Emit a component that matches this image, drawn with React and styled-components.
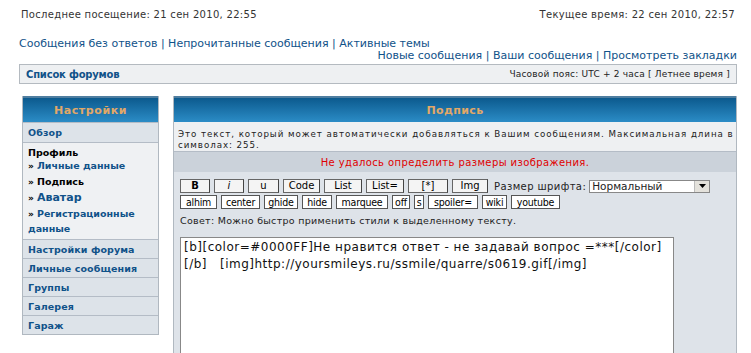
import React from 'react';
import styled, { createGlobalStyle } from 'styled-components';

const GlobalStyle = createGlobalStyle`
	body {
		margin: 0;
		background: #ffffff;
		font-family: 'DejaVu Sans', Verdana, sans-serif;
		color: #222;
	}
`;

const Page = styled.div`
	width: 751px;
	height: 353px;
	overflow: hidden;
	padding: 8px 14px 0 19px;
	box-sizing: border-box;
`;

const InfoRow = styled.div`
	display: flex;
	justify-content: space-between;
	font-size: 10px;
	letter-spacing: 0.3px;
	padding: 0 2px;
	color: #333;
	height: 13px;
	line-height: 13px;
`;

const LinksBlock = styled.div`
	margin-top: 17px;
	font-size: 11px;
	line-height: 12px;
	color: #105289;
	letter-spacing: 0;
`;

const LinksRow = styled.div`
	text-align: ${p => (p.right ? 'right' : 'left')};
`;

const NavBar = styled.div`
	margin-top: 2px;
	height: 18px;
	border: 1px solid #b4bac0;
	background: #eef0f2;
	display: flex;
	justify-content: space-between;
	align-items: center;
	padding: 0 6px;
	font-size: 9px;
	letter-spacing: 0.2px;
`;

const NavTitle = styled.span`
	font-weight: bold;
	color: #105289;
	font-size: 10px;
	letter-spacing: -0.2px;
`;

const Columns = styled.div`
	display: flex;
	gap: 14px;
	margin-top: 12px;
	padding-left: 3px;
`;

const Sidebar = styled.div`
	width: 137px;
	flex: none;
	border: 1px solid #b0b8c0;
	border-top: none;
	box-sizing: border-box;
	align-self: flex-start;
`;

const Header = styled.div`
	height: 26px;
	box-sizing: border-box;
	border-top: 2px solid #4f7ea0;
	background: linear-gradient(#0c5a8e, #2b8cc6);
	color: #e2a867;
	font-weight: bold;
	font-size: 11px;
	letter-spacing: ${p => p.ls || 0.6}px;
	display: flex;
	align-items: center;
	justify-content: center;
`;

const SideItem = styled.div`
	height: ${p => p.h || 19}px;
	box-sizing: border-box;
	background: #dde3e9;
	border-top: 1px solid #b4bcc6;
	padding-left: 5px;
	display: flex;
	align-items: center;
	color: #105289;
	font-weight: bold;
	font-size: 9.5px;
	letter-spacing: 0.1px;
`;

const SubBlock = styled.div`
	background: #eff1f3;
	border-top: 1px solid #b4bcc6;
	padding: 4px 0 3px 5px;
	font-weight: bold;
	font-size: 9.5px;
`;

const SubTitle = styled.div`
	color: #000;
	line-height: 11px;
`;

const SubLink = styled.div`
	color: ${p => (p.active ? '#000' : '#105289')};
	font-size: ${p => p.size || 9.5}px;
	line-height: ${p => p.lh || 16}px;
	&::before {
		content: '» ';
		color: #000;
		font-size: 9px;
	}
`;

const SubCont = styled.div`
	color: #105289;
	line-height: 14px;
`;

const Main = styled.div`
	flex: 1;
	min-width: 0;
	overflow: hidden;
	height: 270px;
	border: 1px solid #b0b8c0;
	border-top: none;
	border-bottom: none;
	background: #dee3e9;
	box-sizing: border-box;
`;

const Description = styled.div`
	background: #eef0f2;
	border-bottom: 1px solid #b4bcc6;
	padding: 7px 2px 2px 4px;
	font-size: 8.7px;
	letter-spacing: 0.95px;
	line-height: 11px;
	color: #222;
	height: 30px;
	box-sizing: border-box;
`;

const ErrorRow = styled.div`
	height: 20px;
	background: #cbd2da;
	color: #e00000;
	font-size: 10px;
	letter-spacing: 0.4px;
	display: flex;
	align-items: center;
	justify-content: center;
`;

const Editor = styled.div`
	padding: 7px 6px 0 6px;
`;

const ToolRow = styled.div`
	display: flex;
	align-items: center;
	gap: ${p => p.gap || 4}px;
	margin-bottom: ${p => p.mb || 0}px;
`;

const TagButton = styled.button`
	height: 14px;
	width: ${p => p.w}px;
	padding: 0;
	margin: 0;
	border: 1px solid #666;
	border-right-color: #444;
	background: #f4f4f4;
	font-family: 'DejaVu Sans', Verdana, sans-serif;
	font-size: 10px;
	font-weight: ${p => (p.bold ? 'bold' : 'normal')};
	font-style: ${p => (p.italic ? 'italic' : 'normal')};
	color: #000;
	line-height: 12px;
`;

const SmallButton = styled.button`
	height: 14px;
	padding: 0 1px;
	margin: 0;
	border: 1px solid #555;
	background: #fff;
	font-family: 'DejaVu Sans Condensed', 'DejaVu Sans', sans-serif;
	font-size: 10.5px;
	letter-spacing: -0.2px;
	color: #000;
	line-height: 12px;
	width: ${p => p.w}px;
`;

const FontLabel = styled.span`
	font-size: 10px;
	letter-spacing: 0.4px;
	margin-left: 2px;
	color: #222;
`;

const SelectBox = styled.div`
	width: 121px;
	height: 13px;
	border: 1px solid #888;
	background: #fff;
	display: flex;
	align-items: center;
	justify-content: space-between;
	font-size: 10.5px;
	padding-left: 2px;
	box-sizing: border-box;
	margin-left: -1px;
`;

const Arrow = styled.div`
	width: 14px;
	height: 11px;
	background: #e4e2dc;
	border-left: 1px solid #bbb;
	display: flex;
	align-items: center;
	justify-content: center;
`;

const Tip = styled.div`
	font-size: 9.5px;
	letter-spacing: 0.3px;
	color: #222;
	margin: 6px 0 0 0;
	height: 14px;
`;

const TextArea = styled.div`
	width: 494px;
	height: 130px;
	margin-top: 8px;
	border: 1px solid #888;
	background: #fff;
	box-sizing: border-box;
	padding: 1px 3px;
	font-size: 12px;
	line-height: 17px;
	color: #111;
	white-space: pre;
	letter-spacing: 0.5px;
`;

const row1 = [
	{ t: 'B', w: 30, bold: true },
	{ t: 'i', w: 30, italic: true },
	{ t: 'u', w: 31 },
	{ t: 'Code', w: 37 },
	{ t: 'List', w: 38 },
	{ t: 'List=', w: 38 },
	{ t: '[*]', w: 40 },
	{ t: 'Img', w: 36 },
];

const row2 = [
	['alhim', 37],
	['center', 39],
	['ghide', 34],
	['hide', 30],
	['marquee', 52],
	['off', 18],
	['s', 10],
	['spoiler=', 50],
	['wiki', 25],
	['youtube', 49],
];

const sideItems = ['Настройки форума', 'Личные сообщения', 'Группы', 'Галерея', 'Гараж'];

const App = () => (
	<>
		<GlobalStyle />
		<Page>
			<InfoRow>
				<span>Последнее посещение: 21 сен 2010, 22:55</span>
				<span>Текущее время: 22 сен 2010, 22:57</span>
			</InfoRow>
			<LinksBlock>
				<LinksRow>Сообщения без ответов | Непрочитанные сообщения | Активные темы</LinksRow>
				<LinksRow right>Новые сообщения | Ваши сообщения | Просмотреть закладки</LinksRow>
			</LinksBlock>
			<NavBar>
				<NavTitle>Список форумов</NavTitle>
				<span>Часовой пояс: UTC + 2 часа [ Летнее время ]</span>
			</NavBar>
			<Columns>
				<Sidebar>
					<Header>Настройки</Header>
					<SideItem h={20}>Обзор</SideItem>
					<SubBlock>
						<SubTitle>Профиль</SubTitle>
						<SubLink>Личные данные</SubLink>
						<SubLink active>Подпись</SubLink>
						<SubLink size={11}>Аватар</SubLink>
						<SubLink lh={15}>Регистрационные</SubLink>
						<SubCont>данные</SubCont>
					</SubBlock>
					{sideItems.map(item => (
						<SideItem key={item}>{item}</SideItem>
					))}
				</Sidebar>
				<Main>
					<Header ls={0.4}>Подпись</Header>
					<Description>
						Это текст, который может автоматически добавляться к Вашим сообщениям. Максимальная длина в
						символах: 255.
					</Description>
					<ErrorRow>Не удалось определить размеры изображения.</ErrorRow>
					<Editor>
						<ToolRow mb={2}>
							{row1.map(b => (
								<TagButton key={b.t} w={b.w} bold={b.bold} italic={b.italic}>
									{b.t}
								</TagButton>
							))}
							<FontLabel>Размер шрифта:</FontLabel>
							<SelectBox>
								<span>Нормальный</span>
								<Arrow>
									<svg width="7" height="4" viewBox="0 0 7 4">
										<path d="M0 0h7L3.5 4z" fill="#000" />
									</svg>
								</Arrow>
							</SelectBox>
						</ToolRow>
						<ToolRow>
							{row2.map(([t, w]) => (
								<SmallButton key={t} w={w}>
									{t}
								</SmallButton>
							))}
						</ToolRow>
						<Tip>Совет: Можно быстро применить стили к выделенному тексту.</Tip>
						<TextArea>
							{'[b][color=#0000FF]Не нравится ответ - не задавай вопрос =***[/color]\n[/b]   [img]http://yoursmileys.ru/ssmile/quarre/s0619.gif[/img]'}
						</TextArea>
					</Editor>
				</Main>
			</Columns>
		</Page>
	</>
);

export default App;
